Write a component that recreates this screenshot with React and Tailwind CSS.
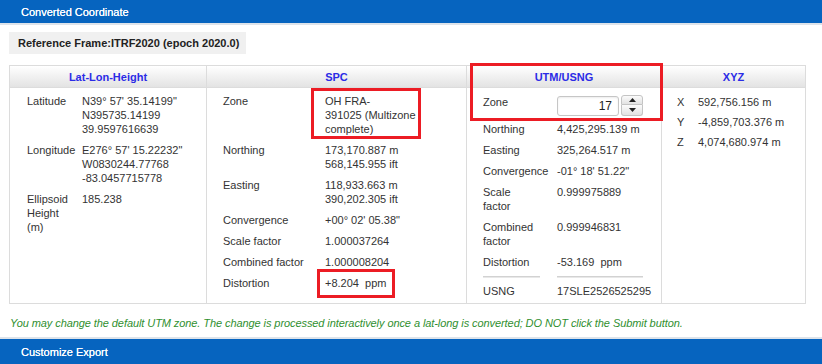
import React from "react";

function Row({ label, labelW, children, className = "" }) {
  return (
    <div className={"flex " + className}>
      <div className="shrink-0" style={{ width: labelW }}>{label}</div>
      <div className="flex-1">{children}</div>
    </div>
  );
}

function ColHead({ children }) {
  return (
    <div className="h-[22px] shrink-0 flex items-center justify-center border-b border-[#dcdcdc] bg-gradient-to-b from-white to-[#e3e3e3] font-bold text-[#2b2be6]">
      {children}
    </div>
  );
}

export default function App() {
  return (
    <div className="w-[822px] h-[364px] overflow-hidden bg-white font-['Liberation_Sans',Arial,sans-serif] text-[11px] leading-[14px] text-[#333]">
      <div className="h-[23px] bg-[#0664bf] text-white pl-[21px] flex items-center [text-shadow:0_0_0.4px_#fff]">Converted Coordinate</div>
      <div className="h-[2px] bg-[#dde3ea]" />
      <div className="pl-[9px] pt-[7px]">
        <div className="flex h-[22px] w-[237px] items-center bg-[#f0f0f0] pl-[9px] font-bold text-[#222]">
          Reference Frame:ITRF2020 (epoch 2020.0)
        </div>
      </div>

      <div className="relative ml-[9px] mt-[11px] w-[797px] h-[239px] border border-[#dcdcdc] flex">
        {/* Lat-Lon-Height */}
        <div className="w-[197px] border-r border-[#dcdcdc] flex flex-col">
          <ColHead>Lat-Lon-Height</ColHead>
          <div className="pl-[17px] pt-[6px] flex flex-col gap-[7px]">
            <Row label="Latitude" labelW={55}>
              <div>N39° 57' 35.14199"</div>
              <div>N395735.14199</div>
              <div>39.9597616639</div>
            </Row>
            <Row label="Longitude" labelW={55}>
              <div>E276° 57' 15.22232"</div>
              <div>W0830244.77768</div>
              <div>-83.0457715778</div>
            </Row>
            <Row label={<span>Ellipsoid<br />Height<br />(m)</span>} labelW={55}>
              <div>185.238</div>
            </Row>
          </div>
        </div>

        {/* SPC */}
        <div className="w-[260px] border-r border-[#dcdcdc] flex flex-col">
          <ColHead>SPC</ColHead>
          <div className="pl-[16px] pt-[6px] flex flex-col gap-[7px]">
            <Row label="Zone" labelW={102}>
              <div>OH FRA-</div>
              <div>391025 (Multizone</div>
              <div>complete)</div>
            </Row>
            <Row label="Northing" labelW={102}>
              <div>173,170.887 m</div>
              <div>568,145.955 ift</div>
            </Row>
            <Row label="Easting" labelW={102}>
              <div>118,933.663 m</div>
              <div>390,202.305 ift</div>
            </Row>
            <Row label="Convergence" labelW={102}>
              <div>+00° 02' 05.38"</div>
            </Row>
            <Row label="Scale factor" labelW={102}>
              <div>1.000037264</div>
            </Row>
            <Row label="Combined factor" labelW={102}>
              <div>1.000008204</div>
            </Row>
            <Row label="Distortion" labelW={102}>
              <div>+8.204&nbsp;&nbsp;ppm</div>
            </Row>
          </div>
        </div>

        {/* UTM/USNG */}
        <div className="w-[195px] border-r border-[#dcdcdc] flex flex-col">
          <ColHead>UTM/USNG</ColHead>
          <div className="pl-[16px] pt-[7px] flex flex-col">
            <Row label="Zone" labelW={74}>
              <div className="flex items-center">
                <div className="w-[62px] h-[20px] border border-[#c6c6c6] rounded-[3px] bg-white shadow-[inset_0_1px_2px_rgba(0,0,0,0.08)] flex items-center justify-end pr-[6px] text-[12px] text-[#222]">
                  17
                </div>
                <div className="ml-[2px] w-[22px] h-[21px] flex flex-col">
                  <div className="h-[10px] border border-[#c4c4c4] rounded-t-[3px] bg-gradient-to-b from-[#fbfbfb] to-[#e2e2e2] flex items-center justify-center">
                    <svg width="7" height="4" viewBox="0 0 7 4"><path d="M0 4 L3.5 0 L7 4 Z" fill="#222" /></svg>
                  </div>
                  <div className="h-[11px] border border-t-0 border-[#c4c4c4] rounded-b-[3px] bg-gradient-to-b from-[#fbfbfb] to-[#e2e2e2] flex items-center justify-center">
                    <svg width="7" height="4" viewBox="0 0 7 4"><path d="M0 0 L3.5 4 L7 0 Z" fill="#222" /></svg>
                  </div>
                </div>
              </div>
            </Row>
            <Row label="Northing" labelW={74} className="mt-[6px]">4,425,295.139 m</Row>
            <Row label="Easting" labelW={74} className="mt-[7px]">325,264.517 m</Row>
            <Row label="Convergence" labelW={74} className="mt-[7px]">-01° 18' 51.22"</Row>
            <Row label={<span>Scale<br />factor</span>} labelW={74} className="mt-[7px]">0.999975889</Row>
            <Row label={<span>Combined<br />factor</span>} labelW={74} className="mt-[7px]">0.999946831</Row>
            <Row label="Distortion" labelW={74} className="mt-[7px]">-53.169&nbsp;&nbsp;ppm</Row>
            <div className="flex mt-[7px]">
              <div className="w-[57px] h-[2px] bg-[#d2d2d2] border-b border-[#e8e8e8]" />
              <div className="ml-[17px] w-[86px] h-[2px] bg-[#d2d2d2] border-b border-[#e8e8e8]" />
            </div>
            <Row label="USNG" labelW={74} className="mt-[6px]">17SLE2526525295</Row>
          </div>
        </div>

        {/* XYZ */}
        <div className="flex-1 flex flex-col">
          <ColHead>XYZ</ColHead>
          <div className="pl-[15px] pt-[7px] flex flex-col gap-[6px]">
            <Row label="X" labelW={21}>592,756.156 m</Row>
            <Row label="Y" labelW={21}>-4,859,703.376 m</Row>
            <Row label="Z" labelW={21}>4,074,680.974 m</Row>
          </div>
        </div>

        {/* annotation overlays */}
        <div className="absolute left-[301px] top-[22px] w-[110px] h-[51px] border-[3px] border-[#ec1c24] pointer-events-none" />
        <div className="absolute left-[307px] top-[203px] w-[78px] h-[29px] border-[3px] border-[#ec1c24] pointer-events-none" />
        <div className="absolute left-[460px] top-[-3px] w-[193px] h-[58px] border-[3px] border-[#ec1c24] pointer-events-none" />
      </div>

      <p className="pl-[10px] mt-[12px] italic text-[#2f8f2f] tracking-[-0.08px]">
        You may change the default UTM zone. The change is processed interactively once a lat-long is converted; DO NOT click the Submit button.
      </p>
      <div className="mt-[7px] h-[2px] bg-[#dde3ea]" />
      <div className="h-[26px] bg-[#0664bf] text-white pl-[21px] flex items-center [text-shadow:0_0_0.4px_#fff]">Customize Export</div>
    </div>
  );
}
